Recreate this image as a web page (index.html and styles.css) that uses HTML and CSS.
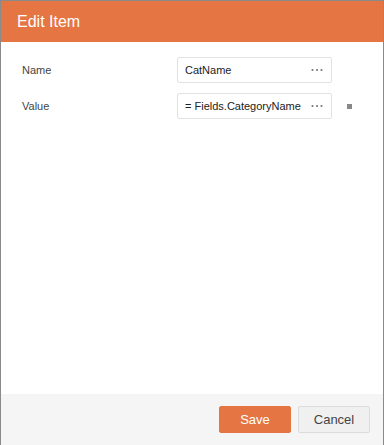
FILE: index.html
```html
<!DOCTYPE html>
<html lang="en">
<head>
    <meta charset="utf-8">
    <title>Edit Item</title>
    <link rel="stylesheet" href="styles.css">
</head>
<body>
    <div class="dialog" role="dialog" aria-labelledby="dialog-title">
        <header class="dialog-header">
            <h1 class="dialog-title" id="dialog-title">Edit Item</h1>
        </header>

        <section class="dialog-body">
            <div class="field-row">
                <label class="field-label">Name</label>
                <div class="field-input">
                    <span class="field-value">CatName</span>
                    <svg class="field-more" width="12" height="4" viewBox="0 0 12 4">
                        <circle cx="1.5" cy="2" r="1.1"/>
                        <circle cx="6" cy="2" r="1.1"/>
                        <circle cx="10.5" cy="2" r="1.1"/>
                    </svg>
                </div>
                <span class="field-marker"></span>
            </div>
            <div class="field-row">
                <label class="field-label">Value</label>
                <div class="field-input">
                    <span class="field-value">= Fields.CategoryName</span>
                    <svg class="field-more" width="12" height="4" viewBox="0 0 12 4">
                        <circle cx="1.5" cy="2" r="1.1"/>
                        <circle cx="6" cy="2" r="1.1"/>
                        <circle cx="10.5" cy="2" r="1.1"/>
                    </svg>
                </div>
                <span class="field-marker visible"></span>
            </div>
        </section>

        <footer class="dialog-footer">
            <button class="btn btn-primary" type="button">Save</button>
            <button class="btn btn-default" type="button">Cancel</button>
        </footer>
    </div>
</body>
</html>
```

FILE: styles.css
```css
:root {
    --accent: #e57543;
    --border: #8a8a8a;
    --text: #333;
    --footer: #f5f5f5;
}

* {
    margin: 0;
    padding: 0;
    box-sizing: border-box;
}

html, body {
    height: 100%;
}

body {
    font-family: 'Liberation Sans', Arial, sans-serif;
    color: var(--text);
    background: #fff;
}

.dialog {
    height: 445px;
    display: flex;
    flex-direction: column;
    border: 1px solid var(--border);
    border-bottom: none;
}

.dialog-header {
    background: var(--accent);
    height: 41px;
    display: flex;
    align-items: center;
    padding-left: 16px;
}

.dialog-title {
    font-size: 16px;
    font-weight: 400;
    color: #fff;
    line-height: 1;
    margin-top: 1px;
}

.dialog-body {
    flex: 1;
    padding: 15px 0 0 21px;
    display: flex;
    flex-direction: column;
    gap: 10px;
}

.field-row {
    display: grid;
    grid-template-columns: 140px 155px 5px;
    column-gap: 15px;
    align-items: center;
    height: 26px;
}

.field-label {
    font-size: 11px;
    color: #444;
}

.field-input {
    height: 26px;
    border: 1px solid #e2e2e2;
    border-radius: 2px;
    display: flex;
    align-items: center;
    justify-content: space-between;
    padding: 0 8px 0 7px;
    font-size: 11px;
    color: #222;
}

.field-more {
    fill: #777;
}

.field-marker {
    width: 5px;
    height: 5px;
}

.field-marker.visible {
    background: #888;
}

.dialog-footer {
    height: 51px;
    background: var(--footer);
    display: flex;
    justify-content: flex-end;
    align-items: flex-start;
    gap: 7px;
    padding: 12px 13px 0 0;
}

.btn {
    width: 72px;
    height: 27px;
    font-family: inherit;
    font-size: 13px;
    border-radius: 2px;
    cursor: pointer;
}

.btn-primary {
    background: var(--accent);
    border: 1px solid var(--accent);
    color: #fff;
}

.btn-default {
    background: #f0f0f0;
    border: 1px solid #dcdcdc;
    color: #444;
}
```
